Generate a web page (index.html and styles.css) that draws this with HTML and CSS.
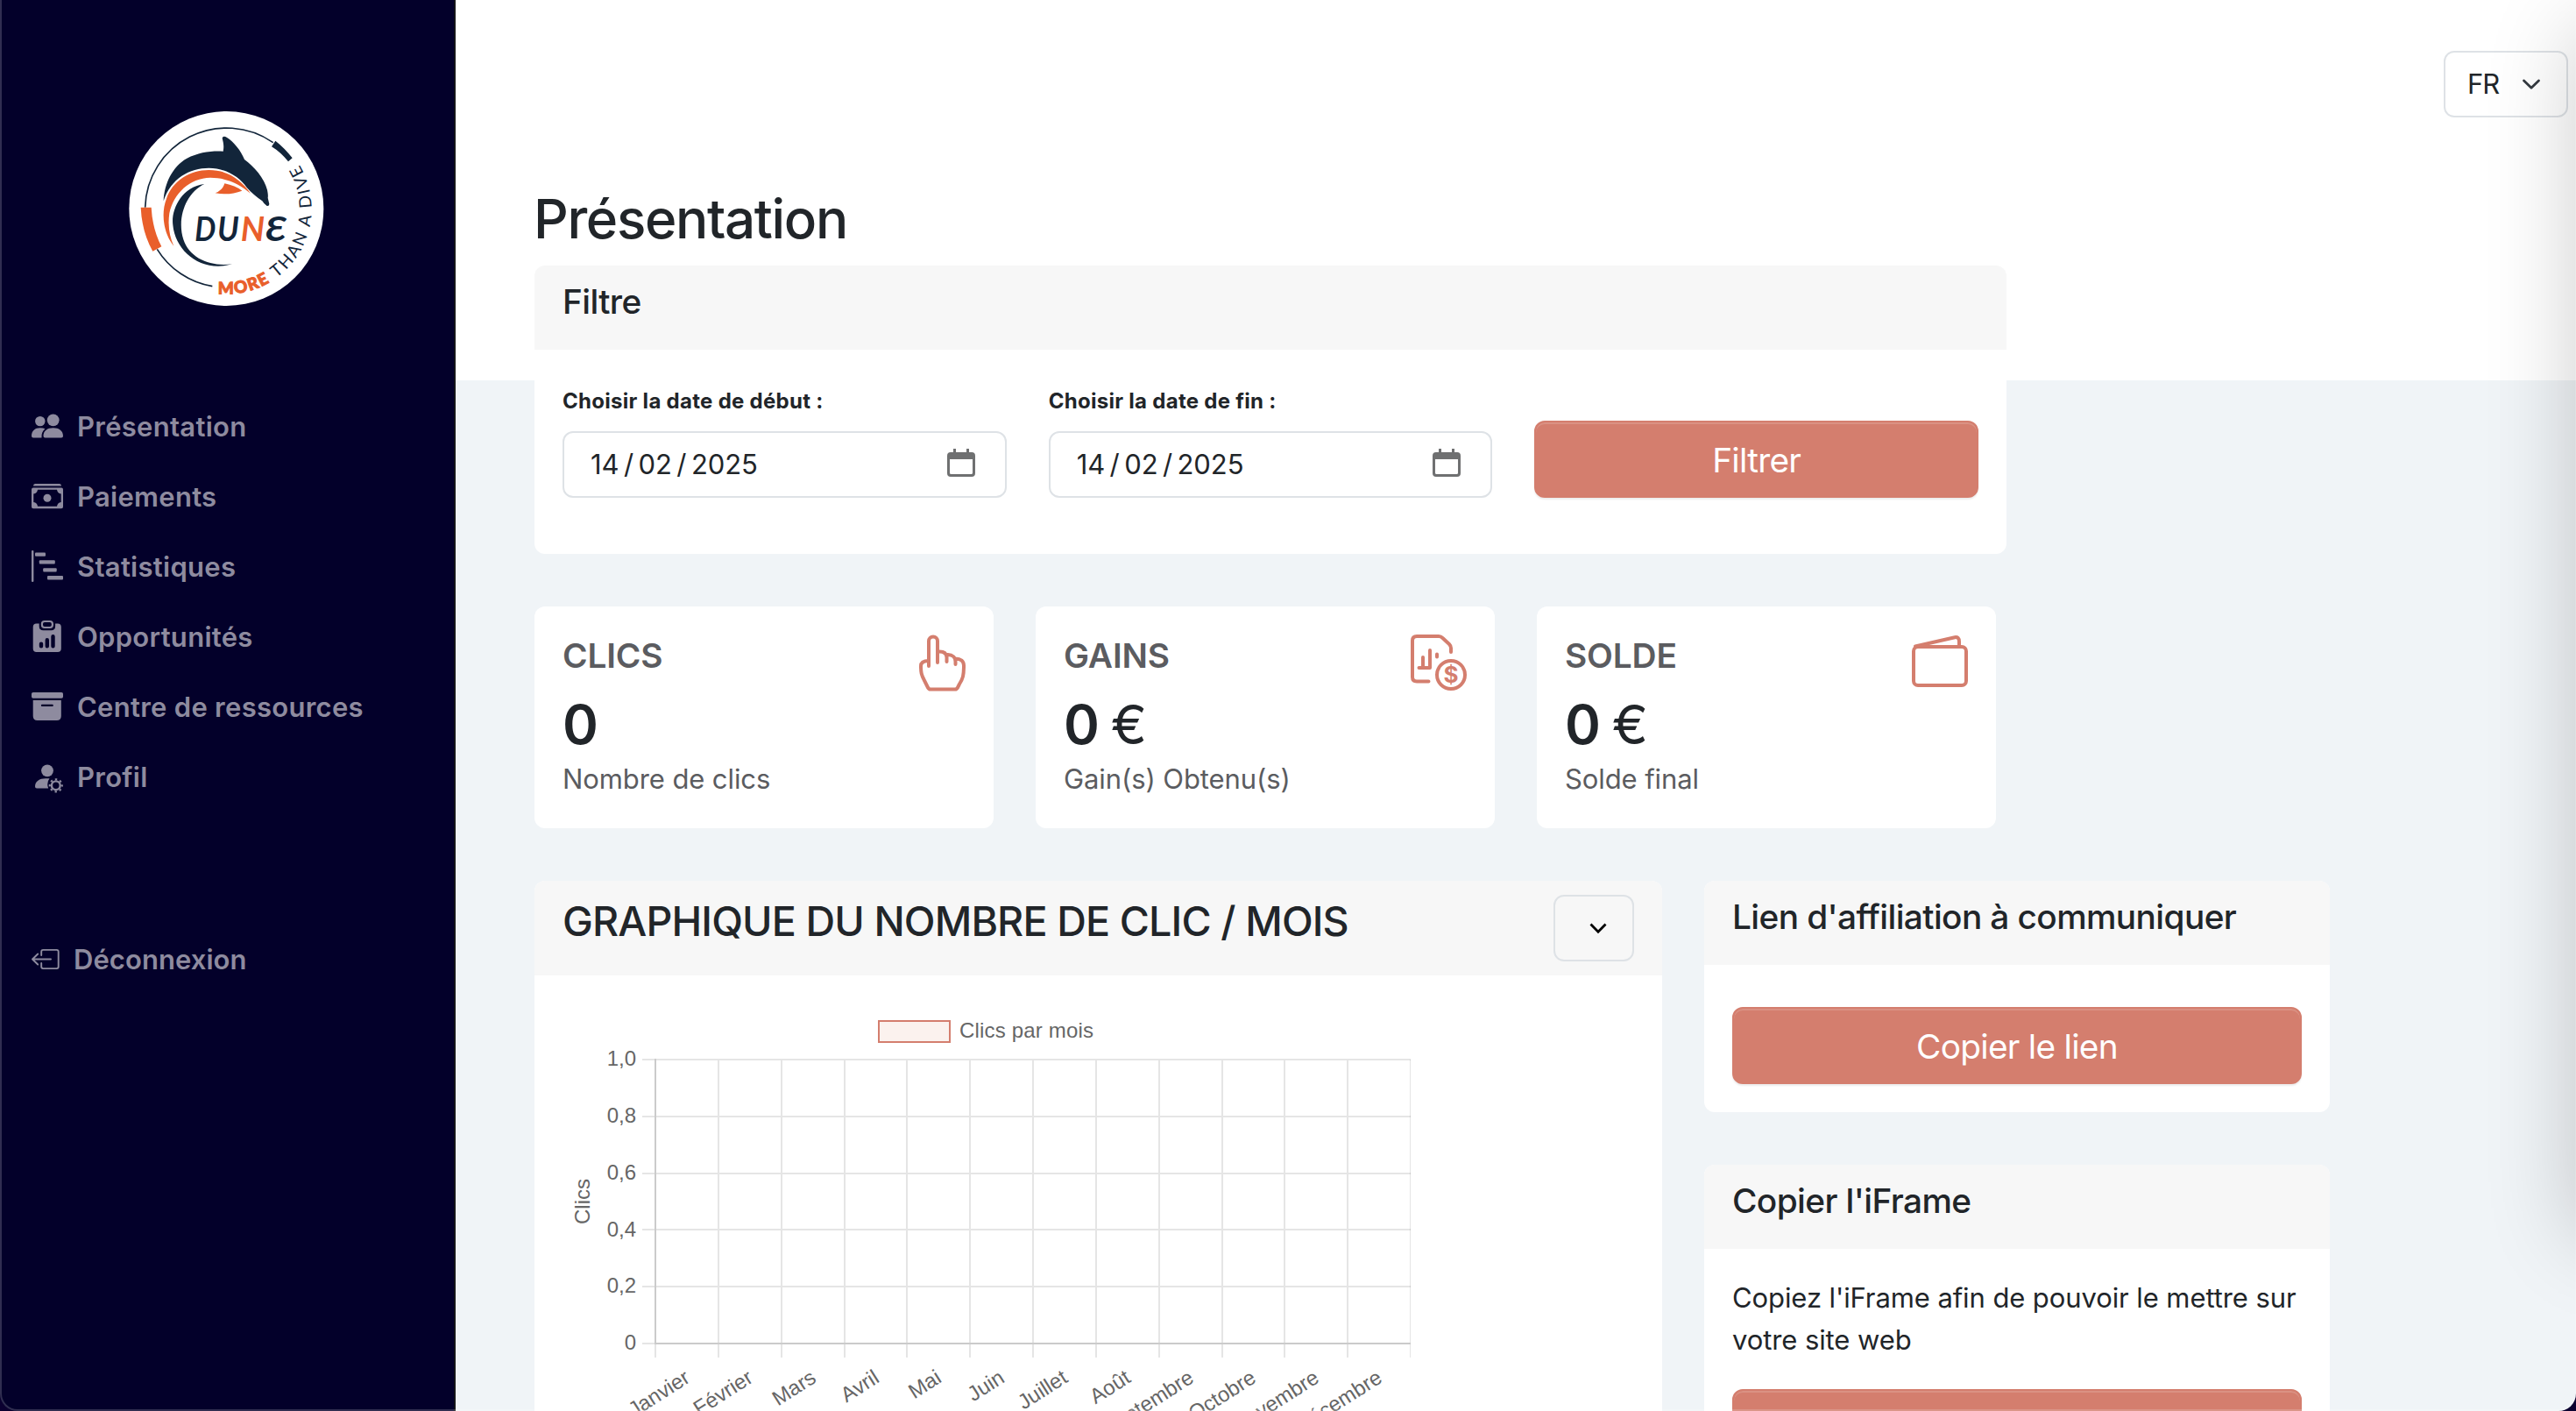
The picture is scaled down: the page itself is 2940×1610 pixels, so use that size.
FILE: index.html
```
<!DOCTYPE html>
<html lang="fr">
<head>
<meta charset="utf-8">
<title>Présentation</title>
<link rel="stylesheet" href="styles.css">
</head>
<body>
<aside class="sidebar">
  <svg class="logo" viewBox="0 0 780 780">
    <defs>
      <path id="ring-more" d="M356 675 A292 292 0 0 0 560 618"/>
      <path id="ring-than" d="M556 621 A292 292 0 0 0 630 226"/>
    </defs>
    <circle cx="385" cy="384" r="333" fill="#fff"/>
    <path d="M107 380 A279 279 0 0 1 545 158 M148 523 A276 276 0 0 0 337 650" fill="none" stroke="#12253a" stroke-width="5"/>
    <path d="M553 152 Q586 178 611 211 L597 223 Q570 190 540 172Z" fill="#12253a"/>
    <path d="M92 380 L128 380 Q132 455 163 514 L133 530 Q96 465 92 380Z" fill="#e95f2b"/>
    <path d="M170 358 C172 300 200 240 250 212 C290 192 330 186 374 188 C378 170 374 155 371 143 C373 135 380 136 386 140 C410 155 435 185 447 216 C480 240 515 280 525 320 C528 335 528 342 527 347 L532 368 Q532 376 524 375 Q512 366 508 358 C490 345 470 330 455 312 C430 275 380 245 325 245 C260 245 195 280 170 358Z" fill="#12253a"/>
    <path d="M205 512 C170 470 160 400 180 350 C200 290 260 252 325 252 C390 252 435 285 468 332 C430 300 385 278 330 278 C260 280 205 330 190 400 C184 440 190 480 205 512Z" fill="#e95f2b"/>
    <path d="M310 300 C230 310 195 390 202 440 C210 530 300 605 405 574 C330 584 260 555 238 490 C215 420 245 330 310 300Z" fill="#12253a"/>
    <path d="M347 331 Q372 322 379 298 Q415 305 439 323 Q395 340 347 331Z" fill="#e95f2b"/>
    <g class="logo-name">
      <text x="277" y="496" textLength="72" lengthAdjust="spacingAndGlyphs">D</text>
      <text x="354" y="496" textLength="74" lengthAdjust="spacingAndGlyphs">U</text>
      <text x="434" y="496" textLength="82" lengthAdjust="spacingAndGlyphs" class="accent">N</text>
      <text x="518" y="496" textLength="72" lengthAdjust="spacingAndGlyphs">Ɛ</text>
    </g>
    <text class="logo-more"><textPath href="#ring-more" textLength="184">MORE</textPath></text>
    <text class="logo-than"><textPath href="#ring-than" textLength="434">THAN A DIVE</textPath></text>
  </svg>
  <nav class="nav">
    <a class="nav-item"><svg class="nav-icon" viewBox="0 0 36 36"><circle cx="9.8" cy="11.6" r="5.7"/><circle cx="24.7" cy="10.3" r="6.9"/><path d="M0 28.5C0 22.5 4 19.2 9.8 19.2Q13.500 19.200 15.500 20.200C12.500 22.500 11.300 25.500 11.500 30.400H2Q0 30.400 0 28.500ZM13.500 28.500C13.500 22.500 18 19.200 24.700 19.200S36 22.500 36 28.500Q36 30.400 34 30.400H15.500Q13.500 30.400 13.500 28.500Z"/></svg>Présentation</a>
    <a class="nav-item"><svg class="nav-icon" viewBox="0 0 36 36"><path d="M4 3H32Q34 3 34 5.500H2Q2 3 4 3Z"/><path fill-rule="evenodd" d="M2 7.500H34Q36 7.500 36 9.500V29.200Q36 31.200 34 31.200H2Q0 31.200 0 29.200V9.500Q0 7.500 2 7.500ZM7 9.800Q6.500 14 2.300 14.500V24Q6.500 24.500 7 28.800H29Q29.500 24.500 33.700 24V14.500Q29.500 14 29 9.800Z"/><circle cx="18" cy="19.200" r="4.500"/></svg>Paiements</a>
    <a class="nav-item"><svg class="nav-icon" viewBox="0 0 36 36"><rect y="-1" width="2.400" height="36" rx="1"/><rect x="4" y="1.500" width="12" height="4.300" rx="1"/><rect x="8.800" y="10.300" width="18" height="4.300" rx="1"/><rect x="13.200" y="19.200" width="15.500" height="4.300" rx="1"/><rect x="18" y="28.100" width="18" height="4.300" rx="1"/></svg>Statistiques</a>
    <a class="nav-item"><svg class="nav-icon" viewBox="0 0 36 36"><path fill-rule="evenodd" d="M5.700 2.400H8.700V5.500Q8.700 10.200 13.400 10.200H22.400Q27.100 10.200 27.100 5.500V2.400H29.800Q33.800 2.400 33.800 6.400V31Q33.800 35 29.800 35H5.700Q1.700 35 1.700 31V6.400Q1.700 2.400 5.700 2.400ZM8.800 25.600V28.300A2.200 2.200 0 0 0 13.200 28.300V25.600A2.200 2.200 0 0 0 8.800 25.600ZM15.600 21.200V28.300A2.200 2.200 0 0 0 20 28.300V21.200A2.200 2.200 0 0 0 15.600 21.200ZM22.300 17.200V28.300A2.200 2.200 0 0 0 26.700 28.300V17.200A2.200 2.200 0 0 0 22.300 17.200Z"/><rect x="11.900" y="0" width="12" height="7" rx="3" fill="none" stroke="currentColor" stroke-width="2.200"/></svg>Opportunités</a>
    <a class="nav-item"><svg class="nav-icon" viewBox="0 0 36 36"><rect y="1" width="36" height="6.700" rx="1.800"/><path fill-rule="evenodd" d="M1.700 10H33.800V28Q33.800 33 28.800 33H6.700Q1.700 33 1.700 28ZM12 14.800A1.150 1.150 0 0 0 12 17.100H23.700A1.150 1.150 0 0 0 23.700 14.800Z"/></svg>Centre de ressources</a>
    <a class="nav-item"><svg class="nav-icon" viewBox="0 0 36 36"><circle cx="18" cy="10.300" r="6.900"/><path d="M4 28.500C4 22.500 9 19.200 16 19.200H20.500Q18.200 22 18.200 26Q18.200 28.500 19.200 30.400H6Q4 30.400 4 28.500Z"/><circle cx="27.800" cy="27.300" r="4.900" fill="none" stroke="currentColor" stroke-width="2.400"/><circle cx="27.800" cy="27.300" r="7" fill="none" stroke="currentColor" stroke-width="2.200" stroke-dasharray="2.400 3.098" stroke-dashoffset="1.200"/></svg>Profil</a>
    <a class="nav-item logout"><svg class="nav-icon" viewBox="0 0 36 36"><path d="M11.200 13V8.900Q11.200 6.900 13.200 6.900H28.700Q30.700 6.900 30.700 8.900V26.100Q30.700 28.100 28.700 28.100H13.200Q11.200 28.100 11.200 26.100V22M22 17.500H1M7.200 11.500L1 17.500L7.200 23.500" fill="none" stroke="currentColor" stroke-width="1.900" stroke-linecap="round" stroke-linejoin="round"/></svg>Déconnexion</a>
  </nav>
</aside>

<main class="main">
  <div class="topbar">
    <div class="select lang">FR<svg class="chev" viewBox="0 0 20 12"><path d="M1.500 2L10 10.300L18.500 2"/></svg></div>
  </div>
  <h1 class="title">Présentation</h1>

  <section class="card filter">
    <header class="card-head"><h5>Filtre</h5></header>
    <div class="filter-body">
      <div class="field"><label>Choisir la date de début :</label>
        <div class="date"><span>14</span><i>/</i><span>02</span><i>/</i><span>2025</span><svg class="cal" viewBox="0 0 32 32"><path d="M7 0H10V4H22V0H25V4H28Q32 4 32 8V28Q32 32 28 32H4Q0 32 0 28V8Q0 4 4 4H7ZM3 12V27.500Q3 29 4.500 29H27.500Q29 29 29 27.500V12Z"/></svg></div></div>
      <div class="field"><label>Choisir la date de fin :</label>
        <div class="date"><span>14</span><i>/</i><span>02</span><i>/</i><span>2025</span><svg class="cal" viewBox="0 0 32 32"><path d="M7 0H10V4H22V0H25V4H28Q32 4 32 8V28Q32 32 28 32H4Q0 32 0 28V8Q0 4 4 4H7ZM3 12V27.500Q3 29 4.500 29H27.500Q29 29 29 27.500V12Z"/></svg></div></div>
      <button class="btn">Filtrer</button>
    </div>
  </section>

  <section class="stats">
    <div class="card stat">
      <div><h3>CLICS</h3><p class="value">0</p><p class="sub">Nombre de clics</p></div>
      <svg class="stat-icon" viewBox="0 0 64 64"><path d="M22 36V7.500a5 5 0 0 1 10 0V32M32 19.500h2.500q7.500 0 8 6.500V31M42.500 23h1.500c5 0 8.500 3 8.500 8V34M52.500 27.500c6 0 9.500 3 9.500 8c0 11-1 15-5 21l-2 4q-1 2-3 2H24q-2 0-3-2l-4-8C13.500 46 13 43 13 36c0-4 3-6 9-6"/></svg>
    </div>
    <div class="card stat">
      <div><h3>GAINS</h3><p class="value">0<span>€</span></p><p class="sub">Gain(s) Obtenu(s)</p></div>
      <svg class="stat-icon" viewBox="0 0 64 64"><path d="M20.500 53.500H7Q2 53.500 2 48.500V7Q2 2 7 2H32Q34.500 2 36.500 4L44 11Q46 13 46 15.500V20M9.500 38H22V18M14 38V26M30 22.500V25.500"/><circle cx="46" cy="46" r="16"/><text x="46" y="54.500">$</text></svg>
    </div>
    <div class="card stat">
      <div><h3>SOLDE</h3><p class="value">0<span>€</span></p><p class="sub">Solde final</p></div>
      <svg class="stat-icon" viewBox="0 0 64 64"><rect x="2" y="14" width="60" height="44" rx="5"/><path d="M4 13.500L49 3.200Q54 2.500 54 8V13"/></svg>
    </div>
  </section>

  <section class="panels">
    <div class="card chart-card">
      <header class="card-head wide"><h4>GRAPHIQUE DU NOMBRE DE CLIC / MOIS</h4>
        <div class="select year"><svg class="chev small" viewBox="0 0 20 12"><path d="M1.500 1.500L10 10.300L18.500 1.500"/></svg></div></header>
      <svg class="chart" viewBox="610 1113 1287 497">
        <rect x="1003" y="1165" width="81" height="24" fill="#fbf2ee" stroke="#d47e6e" stroke-width="2"/>
        <text x="1095" y="1184" textLength="153">Clics par mois</text>
        <path class="grid" d="M733 1209H1610M733 1274H1610M733 1339H1610M733 1403H1610M733 1468H1610M733 1533H748M820 1209V1549M892 1209V1549M964 1209V1549M1035 1209V1549M1107 1209V1549M1179 1209V1549M1251 1209V1549M1323 1209V1549M1395 1209V1549M1466 1209V1549M1538 1209V1549M748 1534V1549"/>
        <path class="grid thin" d="M1609.500 1209V1549"/>
        <path class="axis" d="M748 1208V1533H1610"/>
        <g text-anchor="end">
          <text x="726" y="1216">1,0</text><text x="726" y="1281">0,8</text><text x="726" y="1346">0,6</text>
          <text x="726" y="1411">0,4</text><text x="726" y="1475">0,2</text><text x="726" y="1540">0</text>
          <text transform="translate(789 1576) rotate(-32.500)">Janvier</text>
          <text transform="translate(861 1576) rotate(-32.500)">Février</text>
          <text transform="translate(933 1576) rotate(-32.500)">Mars</text>
          <text transform="translate(1005 1576) rotate(-32.500)">Avril</text>
          <text transform="translate(1076 1576) rotate(-32.500)">Mai</text>
          <text transform="translate(1148 1576) rotate(-32.500)">Juin</text>
          <text transform="translate(1220 1576) rotate(-32.500)">Juillet</text>
          <text transform="translate(1292 1576) rotate(-32.500)">Août</text>
          <text transform="translate(1364 1576) rotate(-32.500)">Septembre</text>
          <text transform="translate(1435 1576) rotate(-32.500)">Octobre</text>
          <text transform="translate(1507 1576) rotate(-32.500)">Novembre</text>
          <text transform="translate(1579 1576) rotate(-32.500)">Décembre</text>
        </g>
        <text transform="translate(672.500 1371) rotate(-90)" text-anchor="middle">Clics</text>
      </svg>
    </div>
    <div class="side">
      <div class="card">
        <header class="card-head"><h5>Lien d'affiliation à communiquer</h5></header>
        <div class="side-body link"><button class="btn">Copier le lien</button></div>
      </div>
      <div class="card">
        <header class="card-head"><h5>Copier l'iFrame</h5></header>
        <div class="side-body"><p class="text">Copiez l'iFrame afin de pouvoir le mettre sur<br>votre site web</p><button class="btn"></button></div>
      </div>
    </div>
  </section>
</main>
<div class="drawer"></div>
<div class="frame"></div>
</body>
</html>
```
FILE: styles.css
```
* { box-sizing: border-box; margin: 0; padding: 0; }
html { background: #03002a; overflow: hidden; }
body {
  display: flex;
  width: 2940px;
  height: 1610px;
  overflow: hidden;
  position: relative;
  font-family: Inter, "Liberation Sans", sans-serif;
  font-size: 31px;
  line-height: 48px;
  letter-spacing: -0.003em;
  color: #212529;
}
svg { display: block; flex: none; overflow: visible; }

.sidebar {
  flex: none;
  width: 520px;
  padding-top: 110px;
  background: #03002a;
  border-right: 2px solid #151519;
}
.logo { width: 260px; height: 260px; margin-left: 130px; }
.logo-name { font: italic 700 112px Lato, sans-serif; fill: #12253a; }
.logo-name .accent { fill: #e95f2b; }
.logo-more { font: 900 57px Lato, sans-serif; fill: #e95f2b; stroke: #e95f2b; stroke-width: 3; }
.logo-than { font: 400 58px Lato, sans-serif; fill: #12253a; }

.nav { margin-top: 77px; padding-left: 36px; }
.nav-item {
  display: flex;
  align-items: center;
  gap: 16px;
  height: 80px;
  font-weight: 600;
  letter-spacing: 0.009em;
  color: #8e8b9f;
}
.nav-icon { width: 36px; height: 36px; fill: currentColor; }
.logout { margin-top: 128px; gap: 12px; letter-spacing: 0.002em; }

.main {
  flex: 1;
  min-width: 0;
  padding-left: 90px;
  background: linear-gradient(#fff 434px, #f0f4f7 434px);
}
.topbar { display: flex; justify-content: flex-end; padding: 58px 9px 0 0; }
.select {
  display: flex;
  align-items: center;
  height: 76px;
  border: 2px solid #dee2e6;
  border-radius: 12px;
}
.lang { width: 142px; padding: 0 30px 0 25px; justify-content: space-between; background: #fff; letter-spacing: -0.03em; }
.chev { width: 20px; height: 12px; fill: none; stroke: #343a40; stroke-width: 2.8; stroke-linecap: round; stroke-linejoin: round; }
.small { stroke: #000; stroke-linecap: butt; stroke-linejoin: miter; }
.year { width: 92px; padding-left: 39px; }

.title { margin: 77px 0 15px -1px; font-size: 62px; line-height: 77px; font-weight: 500; letter-spacing: -0.022em; }

.card { background: #fff; border-radius: 12px; overflow: hidden; }
.card-head { height: 96px; padding: 16px 32px 0; background: #f7f7f7; }
.card-head h5 { font-size: 38.8px; line-height: 50px; font-weight: 500; letter-spacing: -0.0155em; }
.wide { height: 108px; display: flex; justify-content: space-between; }
.wide h4 { font-size: 46.6px; line-height: 61px; font-weight: 500; letter-spacing: -0.0185em; }

.filter { width: 1680px; height: 329px; }
.filter-body { display: grid; grid-template-columns: repeat(3, 1fr); gap: 48px; align-items: end; padding: 41px 32px 0; }
.field label { display: block; margin-bottom: 16px; font-size: 24px; line-height: 36px; font-weight: 700; letter-spacing: 0.012em; }
.date { display: flex; align-items: center; height: 76px; padding: 0 34px 0 30px; border: 2px solid #dee2e6; border-radius: 12px; }
.date i { font-style: normal; margin: 0 5.5px; }
.cal { width: 32px; height: 32px; margin-left: auto; margin-bottom: 4px; fill: #6f7071; }
.btn {
  display: block;
  width: 100%;
  height: 88px;
  border: 2px solid #d47e6e;
  border-radius: 12px;
  background: #d47e6e;
  color: #fff;
  font: 400 38.8px Inter, sans-serif;
  letter-spacing: -0.019em;
  box-shadow: inset 0 2px 0 rgba(255,255,255,.15), 0 2px 2px rgba(0,0,0,.075);
}

.stats { display: flex; gap: 48px; margin-top: 60px; }
.stat { display: flex; justify-content: space-between; width: 524px; height: 253px; padding: 32px; color: #5b5c60; }
.stat h3 { font-size: 38.8px; line-height: 48px; font-weight: 600; letter-spacing: -0.004em; }
.value { margin-top: 17px; font-size: 62px; line-height: 76px; font-weight: 600; color: #212529; }
.value span { font-weight: 400; margin-left: 13px; }
.stat-icon { width: 64px; height: 64px; fill: none; stroke: #d47e6e; stroke-width: 4; stroke-linecap: round; stroke-linejoin: round; }
.stat-icon text { font: 700 26px Inter, sans-serif; fill: #d47e6e; stroke: none; text-anchor: middle; }

.panels { display: flex; align-items: flex-start; gap: 48px; margin-top: 60px; }
.chart-card { width: 1287px; height: 640px; }
.chart { width: 1287px; height: 497px; font: 24px "Liberation Sans", Arial, sans-serif; letter-spacing: 0; fill: #666; }
.grid { fill: none; stroke: rgba(0,0,0,.1); stroke-width: 2; }
.thin { stroke-width: 1; }
.axis { fill: none; stroke: #cbcbcb; stroke-width: 2; }
.side { display: flex; flex-direction: column; gap: 60px; width: 714px; }
.side-body { padding: 32px; }
.link { padding-top: 48px; }
.text { margin-bottom: 32px; white-space: nowrap; }

/* closed drawer, only its shadow reaches the viewport */
.drawer { position: absolute; left: 2940px; top: 0; width: 640px; height: 1380px; box-shadow: 0 32px 96px rgba(0,0,0,.2); }
/* window outline */
.frame { position: absolute; inset: 0; border: 2px solid rgba(255,255,255,.18); border-width: 0 1px 2px 2px; border-radius: 0 0 20px 20px; box-shadow: 0 0 0 30px #0b0030; }
```
